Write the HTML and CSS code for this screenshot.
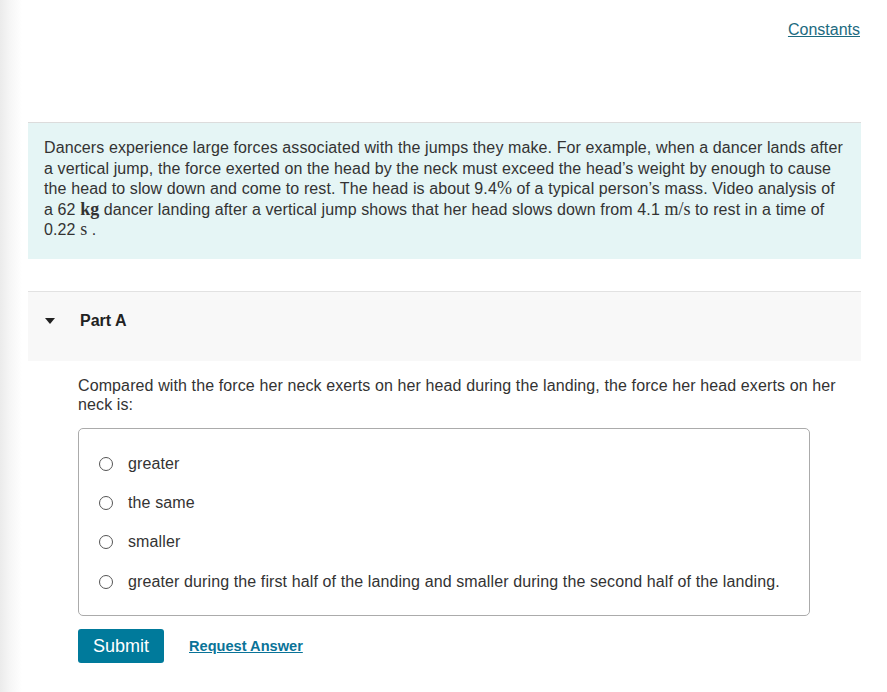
FILE: index.html
```html
<!DOCTYPE html>
<html>
<head>
<meta charset="utf-8">
<link rel="stylesheet" href="styles.css">
</head>
<body>
<div class="page">
  <div class="topbar"><a class="constants" href="#">Constants</a></div>
  <div class="intro">
    <p>Dancers experience large forces associated with the jumps they make. For example, when a dancer lands after a vertical jump, the force exerted on the head by the neck must exceed the head’s weight by enough to cause the head to slow down and come to rest. The head is about 9.4<span class="m">%</span> of a typical person’s mass. Video analysis of a 62 <span class="m mb">kg</span> dancer landing after a vertical jump shows that her head slows down from 4.1 <span class="m">m/s</span> to rest in a time of 0.22 <span class="m">s</span> .</p>
  </div>
  <div class="part-head">
    <span class="tri"></span>
    <span class="part-title">Part A</span>
  </div>
  <div class="part-body">
    <p class="question">Compared with the force her neck exerts on her head during the landing, the force her head exerts on her neck is:</p>
    <div class="choices">
      <label class="choice"><span class="radio"></span><span>greater</span></label>
      <label class="choice"><span class="radio"></span><span>the same</span></label>
      <label class="choice"><span class="radio"></span><span>smaller</span></label>
      <label class="choice"><span class="radio"></span><span>greater during the first half of the landing and smaller during the second half of the landing.</span></label>
    </div>
    <div class="actions">
      <button class="submit">Submit</button>
      <a class="request" href="#">Request Answer</a>
    </div>
  </div>
</div>
</body>
</html>
```

FILE: styles.css
```css
html, body {
  margin: 0;
  padding: 0;
  height: 100%;
}
body {
  background: linear-gradient(to right, #ebebeb 0px, #f6f6f6 10px, #ffffff 22px) no-repeat;
  font-family: "Liberation Sans", Arial, sans-serif;
  font-size: 16px;
  letter-spacing: 0.11px;
  color: #333;
}
.page {
  margin-left: 28px;
  width: 833px;
}
.topbar {
  display: flex;
  justify-content: flex-end;
  padding-top: 21px;
  height: 122px;
  box-sizing: border-box;
}
.constants {
  color: #1c6a80;
  text-decoration: underline;
  font-size: 16px;
  letter-spacing: 0;
  line-height: 18px;
  margin-right: 1px;
}
.intro {
  background: #e5f5f5;
  border-top: 1px solid #dcdcdc;
  padding: 15px 16px 18px 16px;
  height: 137px;
  box-sizing: border-box;
}
.intro p {
  margin: 0;
  line-height: 20.5px;
}
.m {
  font-family: "Liberation Serif", "DejaVu Serif", serif;
  font-size: 18px;
  letter-spacing: 0;
  line-height: 18px;
}
.mb {
  font-weight: bold;
}
.part-head {
  margin-top: 32px;
  border-top: 1px solid #e2e2e2;
  background: #f8f8f8;
  height: 70px;
  box-sizing: border-box;
  display: flex;
  align-items: center;
  padding-left: 17px;
  padding-bottom: 12px;
}
.tri {
  width: 0;
  height: 0;
  border-left: 5px solid transparent;
  border-right: 5px solid transparent;
  border-top: 6px solid #222;
  margin-top: 1px;
}
.part-title {
  margin-left: 25px;
  font-weight: bold;
  font-size: 16px;
  letter-spacing: 0;
  color: #222;
}
.part-body {
  padding-left: 50px;
  padding-right: 20px;
}
.question {
  margin: 15px 0 0 0;
  line-height: 19px;
}
.choices {
  margin-top: 14px;
  margin-right: 31px;
  border: 1px solid #ababab;
  border-radius: 5px;
  height: 188px;
  box-sizing: border-box;
  padding-top: 15px;
  display: flex;
  flex-direction: column;
}
.choice {
  display: flex;
  align-items: center;
  height: 39.3px;
  padding-left: 20px;
}
.radio {
  width: 14px;
  height: 14px;
  border: 1px solid #555;
  border-radius: 50%;
  box-sizing: border-box;
  margin-right: 15px;
  flex: none;
}
.actions {
  display: flex;
  align-items: center;
  margin-top: 13px;
}
.submit {
  background: #007a9b;
  color: #fff;
  border: none;
  border-radius: 3px;
  width: 86px;
  height: 34px;
  font-family: "Liberation Sans", Arial, sans-serif;
  font-size: 18px;
  letter-spacing: 0;
  padding: 0;
}
.request {
  margin-left: 25px;
  color: #0a7398;
  font-weight: bold;
  font-size: 14.6px;
  letter-spacing: 0;
  text-decoration: underline;
}
```
